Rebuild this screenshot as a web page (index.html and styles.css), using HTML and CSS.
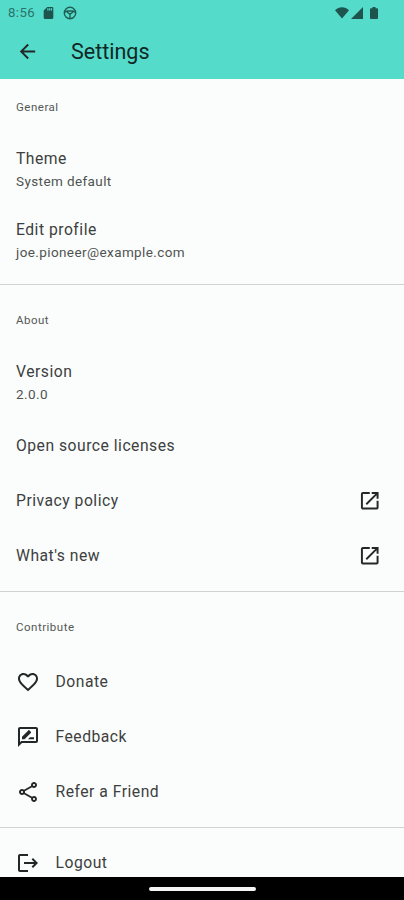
FILE: index.html
```html
<!DOCTYPE html>
<html lang="en">
<head>
<meta charset="utf-8">
<title>Settings</title>
<link rel="stylesheet" href="styles.css">
</head>
<body>
<div class="screen">
  <header class="top">
    <div class="status">
      <span class="clock">8:56</span>
      <svg class="sd" viewBox="4 2 16 20"><path d="M18 2h-8L4 8v12c0 1.100.9 2 2 2h12c1.100 0 2-.9 2-2V4c0-1.100-.9-2-2-2zm-6 6h-2V4h2v4zm3 0h-2V4h2v4zm3 0h-2V4h2v4z"/></svg>
      <svg class="wheel" viewBox="0 0 14 14"><circle cx="7" cy="7" r="5.700"/><path d="M1.500 6.300 4 5h6l2.500 1.300M3.500 5.500 7 8.300 10.500 5.500M7 8.300v4"/></svg>
      <span class="spacer"></span>
      <svg class="wifi" viewBox="0 0 14 12"><path d="M7 11.500 0 3.200C4-.7 10-.7 14 3.200z"/></svg>
      <svg class="signal" viewBox="0 0 12 12"><path d="M0 12 12 0v12z"/></svg>
      <svg class="battery" viewBox="0 0 8 12"><path d="M2.500 0h3v1.200H7q1 0 1 1V11q0 1-1 1H1q-1 0-1-1V2.200q0-1 1-1h1.500z"/></svg>
    </div>
    <div class="bar">
      <svg class="icon" viewBox="0 0 24 24"><path d="M20 11H7.830l5.590-5.590L12 4l-8 8 8 8 1.410-1.410L7.830 13H20v-2z"/></svg>
      <h1>Settings</h1>
    </div>
  </header>
  <main>
    <section>
      <h2>General</h2>
      <div class="row two"><span class="title">Theme</span><span class="sub">System default</span></div>
      <div class="row two"><span class="title">Edit profile</span><span class="sub">joe.pioneer@example.com</span></div>
    </section>
    <section>
      <h2>About</h2>
      <div class="row two"><span class="title">Version</span><span class="sub">2.0.0</span></div>
      <div class="row"><span class="title">Open source licenses</span></div>
      <div class="row link"><span class="title">Privacy policy</span>
        <svg class="icon" viewBox="0 0 24 24"><path d="M19 19H5V5h7V3H5c-1.110 0-2 .9-2 2v14c0 1.100.89 2 2 2h14c1.100 0 2-.9 2-2v-7h-2v7zM14 3v2h3.590l-9.830 9.830 1.410 1.410L19 6.410V10h2V3h-7z"/></svg></div>
      <div class="row link"><span class="title">What's new</span>
        <svg class="icon" viewBox="0 0 24 24"><path d="M19 19H5V5h7V3H5c-1.110 0-2 .9-2 2v14c0 1.100.89 2 2 2h14c1.100 0 2-.9 2-2v-7h-2v7zM14 3v2h3.590l-9.830 9.830 1.410 1.410L19 6.410V10h2V3h-7z"/></svg></div>
    </section>
    <section>
      <h2>Contribute</h2>
      <div class="row"><svg class="icon" viewBox="0 0 24 24"><path d="M16.500 3c-1.740 0-3.410.81-4.500 2.090C10.910 3.810 9.240 3 7.500 3 4.420 3 2 5.420 2 8.500c0 3.780 3.400 6.860 8.550 11.540L12 21.350l1.450-1.320C18.600 15.360 22 12.280 22 8.500 22 5.420 19.580 3 16.500 3zm-4.400 15.550l-.1.100-.1-.1C7.140 14.240 4 11.390 4 8.500 4 6.500 5.500 5 7.500 5c1.540 0 3.040.99 3.570 2.360h1.870C13.460 5.990 14.960 5 16.500 5c2 0 3.500 1.500 3.500 3.500 0 2.890-3.140 5.740-7.900 10.050z"/></svg><span class="title">Donate</span></div>
      <div class="row"><svg class="icon" viewBox="0 0 24 24"><path d="M20 2H4c-1.100 0-2 .9-2 2v18l4-4h14c1.100 0 2-.9 2-2V4c0-1.100-.9-2-2-2zm0 14H5.170L4 17.170V4h16v12z"/><path d="M12 14.200h6v-2h-4zM6 14.200h2.500l6.300-6.300c.4-.4.400-.8 0-1.200l-1.300-1.300c-.4-.4-.8-.4-1.200 0L6 11.700z"/></svg><span class="title">Feedback</span></div>
      <div class="row"><svg class="icon" viewBox="0 0 24 24"><path d="M18 16.080c-.76 0-1.440.3-1.960.77L8.910 12.700c.05-.23.090-.46.090-.7s-.04-.47-.09-.7l7.050-4.110c.54.5 1.250.81 2.040.81 1.660 0 3-1.340 3-3s-1.340-3-3-3-3 1.340-3 3c0 .24.040.47.090.7L8.040 9.810C7.500 9.310 6.790 9 6 9c-1.660 0-3 1.340-3 3s1.340 3 3 3c.79 0 1.500-.31 2.040-.81l7.120 4.160c-.05.210-.08.430-.08.650 0 1.610 1.310 2.920 2.920 2.920s2.920-1.310 2.920-2.920-1.310-2.920-2.920-2.920zM18 4c.55 0 1 .45 1 1s-.45 1-1 1-1-.45-1-1 .45-1 1-1zM6 13c-.55 0-1-.45-1-1s.45-1 1-1 1 .45 1 1-.45 1-1 1zm12 7.020c-.55 0-1-.45-1-1s.45-1 1-1 1 .45 1 1-.45 1-1 1z"/></svg><span class="title">Refer a Friend</span></div>
    </section>
    <section>
      <div class="row"><svg class="icon" viewBox="0 0 24 24"><path d="M17 7l-1.410 1.410L18.170 11H8v2h10.170l-2.580 2.580L17 17l5-5zM4 5h8V3H4c-1.100 0-2 .9-2 2v14c0 1.100.9 2 2 2h8v-2H4V5z"/></svg><span class="title">Logout</span></div>
    </section>
  </main>
  <footer><span class="handle"></span></footer>
</div>
</body>
</html>
```
FILE: styles.css
```css
* { box-sizing: border-box; }
body { margin: 0; font-family: Roboto, "Liberation Sans", sans-serif; }
.screen { width: 404px; height: 900px; display: flex; flex-direction: column; overflow: hidden; background: #fafdfb; color: #3d403f; }
.top { height: 79px; flex: none; background: #55dbca; }
.status { height: 24px; display: flex; align-items: center; padding: 1px 27px 0 8px; color: #2b736a; fill: #1d544d; }
.clock { width: 35px; font-size: 13.2px; letter-spacing: .4px; }
.sd { width: 11px; height: 12px; }
.wheel { width: 14px; height: 14px; margin-left: 9px; fill: none; stroke: #205d55; stroke-width: 1.4; }
.spacer { flex: 1; }
.wifi { width: 14px; height: 12px; }
.signal { width: 12px; height: 12px; margin-left: 2px; }
.battery { width: 8px; height: 12px; margin-left: 7px; }
.status { padding-right: 26.500px; }
.bar { height: 55px; display: flex; align-items: center; padding-left: 16px; gap: 31px; }
.bar .icon { width: 23px; height: 23px; margin-right: 1px; }
h1 { margin: 0; font-size: 21.500px; font-weight: 400; line-height: 28px; color: #102825; }
.icon { width: 24px; height: 24px; flex: none; fill: #222827; }
main { flex: 1; min-height: 0; overflow: hidden; }
section { padding: 7px 0 8px; border-bottom: 1px solid #cfd2d1; }
section:first-child { padding-top: 0; }
section:last-child { border-bottom: 0; }
h2 { margin: 0; height: 55px; padding-left: 16px; font-size: 11.5px; font-weight: 400; line-height: 56px; letter-spacing: .5px; color: #555857; }
.row { height: 55px; display: flex; align-items: center; padding: 0 22px 0 16px; gap: 15.500px; }
.two { height: 71px; flex-direction: column; align-items: flex-start; justify-content: center; gap: 0; }
.link { justify-content: space-between; }
.link .icon { width: 23.500px; height: 23.500px; margin-right: 1px; }
.title { font-size: 15.700px; line-height: 24px; letter-spacing: .5px; }
.sub { font-size: 13.5px; line-height: 21px; letter-spacing: .4px; color: #505352; }
footer { height: 23px; flex: none; background: #000; display: flex; align-items: center; justify-content: center; }
.handle { width: 107px; height: 4px; border-radius: 2px; background: #f5f5f5; }
```
